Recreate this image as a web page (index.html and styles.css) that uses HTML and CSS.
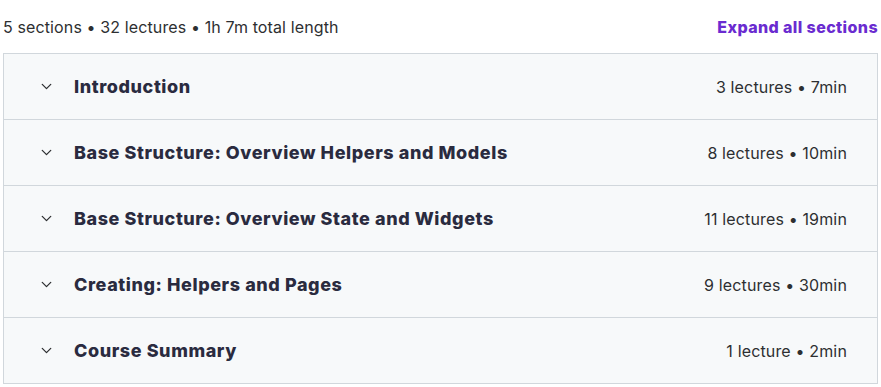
FILE: index.html
```html
<!DOCTYPE html>
<html lang="en">
<head>
  <meta charset="UTF-8" />
  <title>Course content</title>
  <link rel="stylesheet" href="styles.css">
</head>
<body>

<div class="curriculum">
  <div class="curriculum-header">
    <span class="summary">5 sections &bull; 32 lectures &bull; 1h 7m total length</span>
    <button class="expand-all">Expand all sections</button>
  </div>

  <div class="sections">
    <div class="section">
      <svg class="chevron" viewBox="0 0 24 24"><path d="M6 9l6 6 6-6" /></svg>
      <span class="section-title">Introduction</span>
      <span class="section-meta">3 lectures &bull; 7min</span>
    </div>
    <div class="section">
      <svg class="chevron" viewBox="0 0 24 24"><path d="M6 9l6 6 6-6" /></svg>
      <span class="section-title">Base Structure: Overview Helpers and Models</span>
      <span class="section-meta">8 lectures &bull; 10min</span>
    </div>
    <div class="section">
      <svg class="chevron" viewBox="0 0 24 24"><path d="M6 9l6 6 6-6" /></svg>
      <span class="section-title">Base Structure: Overview State and Widgets</span>
      <span class="section-meta">11 lectures &bull; 19min</span>
    </div>
    <div class="section">
      <svg class="chevron" viewBox="0 0 24 24"><path d="M6 9l6 6 6-6" /></svg>
      <span class="section-title">Creating: Helpers and Pages</span>
      <span class="section-meta">9 lectures &bull; 30min</span>
    </div>
    <div class="section">
      <svg class="chevron" viewBox="0 0 24 24"><path d="M6 9l6 6 6-6" /></svg>
      <span class="section-title">Course Summary</span>
      <span class="section-meta">1 lecture &bull; 2min</span>
    </div>
  </div>
</div>

</body>
</html>
```

FILE: styles.css
```css
* {
  box-sizing: border-box;
}

body {
  margin: 0;
  font-family: Inter, "Noto Sans", sans-serif;
  background-color: #fff;
  color: #2d2f31;
}

.curriculum {
  width: 875px;
  margin-left: 3px;
}

.curriculum-header {
  height: 53px;
  display: flex;
  align-items: center;
  justify-content: space-between;
}

.summary {
  font-size: 16px;
  letter-spacing: 0.12px;
  color: #2d2f31;
}

.expand-all {
  background: none;
  border: none;
  padding: 0;
  font-family: inherit;
  font-size: 16px;
  font-weight: 800;
  letter-spacing: 0.4px;
  color: #6a2bd0;
  cursor: pointer;
}

.sections {
  border: 1px solid #d1d7dc;
  border-top: none;
}

.section {
  height: 66px;
  display: flex;
  align-items: center;
  padding: 0 30px 0 34px;
  background-color: #f7f9fa;
  border-top: 1px solid #d1d7dc;
}

.chevron {
  width: 17px;
  height: 17px;
  fill: none;
  stroke: #2d2f31;
  stroke-width: 1.8;
  stroke-linecap: round;
  stroke-linejoin: round;
  flex-shrink: 0;
}

.section-title {
  margin-left: 19px;
  font-size: 18px;
  font-weight: 800;
  letter-spacing: 0.58px;
  color: #2a2b3f;
  flex: 1;
}

.section-meta {
  font-size: 16px;
  letter-spacing: 0.15px;
}
```
